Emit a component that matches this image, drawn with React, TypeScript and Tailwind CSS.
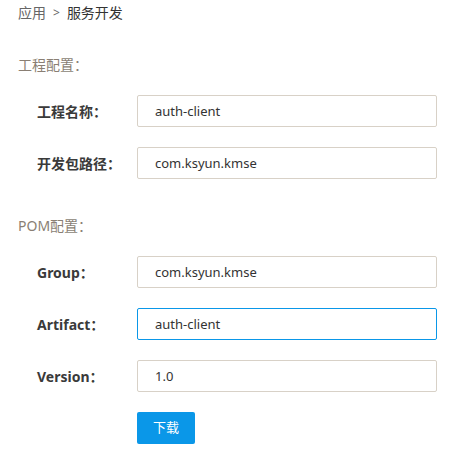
const font = { fontFamily: '"Noto Sans", "Noto Sans CJK SC", sans-serif' };

type Field = { label: string; value: string; active?: boolean };

const project: Field[] = [
  { label: '工程名称：', value: 'auth-client' },
  { label: '开发包路径：', value: 'com.ksyun.kmse' },
];

const pom: Field[] = [
  { label: 'Group：', value: 'com.ksyun.kmse' },
  { label: 'Artifact：', value: 'auth-client', active: true },
  { label: 'Version：', value: '1.0' },
];

function Row({ label, value, active }: Field) {
  return (
    <div className="flex items-center pl-[19px]">
      <label className="w-[100px] text-[14px] font-bold text-[#3a3a3a]">{label}</label>
      <input
        readOnly
        value={value}
        className={
          'h-8 w-[300px] rounded-[2px] border bg-white pl-[17px] text-[13px] text-[#333] outline-none ' +
          (active ? 'border-[#0a97e8]' : 'border-[#d8d1c7]')
        }
      />
    </div>
  );
}

export default function App() {
  return (
    <div className="min-h-[466px] w-[450px] bg-white pl-[18px] pt-[3px]" style={font}>
      {/* breadcrumb */}
      <div className="flex h-5 items-center gap-[7px] text-[14px] leading-5">
        <span className="text-[#666]">应用</span>
        <span className="text-[12px] text-[#666]">&gt;</span>
        <span className="text-[#333]">服务开发</span>
      </div>

      <div className="mt-[32px] text-[14px] leading-5 text-[#8a7f74]">工程配置：</div>
      <div className="mt-[20px] flex flex-col gap-5">
        {project.map((f) => (
          <Row key={f.label} {...f} />
        ))}
      </div>

      <div className="mt-[37px] text-[14px] leading-5 text-[#8a7f74]">POM配置：</div>
      <div className="mt-[20px] flex flex-col gap-5">
        {pom.map((f) => (
          <Row key={f.label} {...f} />
        ))}
        <div className="pl-[119px]">
          <button className="h-8 w-[58px] rounded-[2px] bg-[#0a97e8] text-[13px] text-white">下载</button>
        </div>
      </div>
    </div>
  );
}
